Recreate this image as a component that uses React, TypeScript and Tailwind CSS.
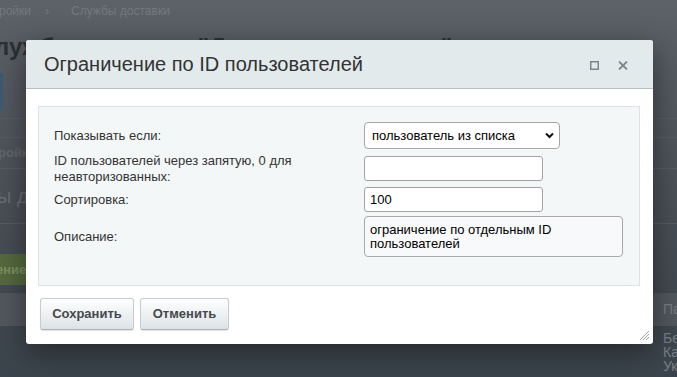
import React from "react";

export default function App() {
  return (
    <div className="relative h-[377px] w-[677px] overflow-hidden bg-linear-to-b from-[#5d6168] via-[#4b5158] to-[#3b444c] font-['Liberation_Sans',Arial,sans-serif]">
      {/* dimmed page behind the dialog */}
      <div className="flex h-full flex-col">
        <div className="flex h-[21px] items-center gap-[14px] whitespace-nowrap text-[12px] leading-[14px] text-[#74787f]">
          <span className="-ml-[1px]">ройки</span>
          <span>›</span>
          <span className="ml-[8px]">Службы доставки</span>
        </div>
        <div className="-ml-[6px] flex h-[44px] items-end gap-[24px] whitespace-nowrap pb-[4px] text-[24px] leading-[28px] font-bold text-[#2c3035]">
          <span>лужбы доставки "Доставка курьером"</span>
          <span className="text-[14px] font-normal text-[#6b7076]">+</span>
        </div>
        <div className="h-[8px]" />
        <div className="flex h-[37px]">
          <div className="w-[3px] bg-[#3a5b74]" />
        </div>
        <div className="h-[8px]" />
        <div className="h-[19px] border-t border-[#585e64]" />
        <div className="flex h-[31px] items-center border-t border-[#585e64] whitespace-nowrap text-[13px] font-bold text-[#62676d]">
          <span className="-ml-[2px]">ройки</span>
        </div>
        <div className="flex h-[56px] items-center border-t border-b border-[#565c62] whitespace-nowrap text-[20px] text-[#696e74]">
          <span className="-ml-[3px]">ы доставки</span>
        </div>
        <div className="h-[30px]" />
        <div className="flex h-[31px]">
          <div className="flex w-[80px] items-center bg-[#56693e] pl-[4px] text-[13px] font-bold text-[#7c9160]">
            <span className="-ml-[8px]">ение</span>
          </div>
        </div>
        <div className="h-[8px]" />
        <div className="flex h-[34px] items-center justify-end border-b border-[#3f474e] bg-[#52585f] text-[14px] text-[#777c83]">
          <span className="w-[14px] overflow-hidden whitespace-nowrap">Па</span>
        </div>
        <div className="flex flex-1 pt-[4px] text-[13px] leading-[14px] text-[#596068]">
          <span className="ml-[160px] w-[220px]">100</span>
          <span>по местоположению</span>
          <div className="ml-auto flex w-[14px] flex-col overflow-hidden whitespace-nowrap text-[14px] leading-[14px] text-[#7a8087]">
            <span>Бе</span>
            <span>Ка</span>
            <span>Ук</span>
          </div>
        </div>
      </div>

      {/* dialog */}
      <div className="absolute left-[26px] top-[40px] flex h-[304px] w-[627px] flex-col rounded-[3px] bg-white shadow-[0_8px_30px_rgba(0,0,0,0.45)]">
        <div className="flex h-[49px] shrink-0 items-center justify-between rounded-t-[3px] border-b border-[#b7bfc3] bg-[#e2eaec] pl-[18px] pr-[25px]">
          <span className="text-[20px] leading-[24px] text-[#333]">Ограничение по ID пользователей</span>
          <div className="flex items-center gap-[19px] pt-[2px]">
            <svg width="9" height="9" viewBox="0 0 9 9">
              <rect x="0.75" y="0.75" width="7.5" height="7.5" fill="none" stroke="#7b868e" strokeWidth="1.5" />
            </svg>
            <svg width="10" height="9" viewBox="0 0 10 9">
              <path d="M1 0.5 L9 8.5 M9 0.5 L1 8.5" stroke="#7b868e" strokeWidth="1.8" />
            </svg>
          </div>
        </div>

        <div className="ml-[12px] mr-[13px] mt-[17px] flex h-[180px] shrink-0 flex-col border border-[#dce3e6] bg-[#f4f7f8] pl-[15px] pt-[15px] text-[13px] text-[#333]">
          <div className="flex h-[27px] items-center">
            <div className="w-[310px] shrink-0">Показывать если:</div>
            <div className="relative">
              <select
                defaultValue="list"
                className="h-[27px] w-[196px] appearance-none rounded-[4px] border border-[#a6a6a6] bg-white pl-[7px] text-[13px] text-black outline-none"
              >
                <option value="list">пользователь из списка</option>
              </select>
              <svg className="pointer-events-none absolute right-[6px] top-[10px]" width="9" height="7" viewBox="0 0 9 7">
                <path d="M1 1.5 L4.5 5 L8 1.5" fill="none" stroke="#111" strokeWidth="2" />
              </svg>
            </div>
          </div>
          <div className="mt-[7px] flex h-[25px] items-center">
            <div className="w-[310px] shrink-0 leading-[16px]">
              ID пользователей через запятую, 0 для
              <br />
              неавторизованных:
            </div>
            <input
              defaultValue=""
              className="h-[25px] w-[179px] rounded-[3px] border border-[#a3a3a3] bg-white px-[5px] text-[13px] text-black outline-none"
            />
          </div>
          <div className="mt-[6px] flex h-[25px] items-center">
            <div className="w-[310px] shrink-0">Сортировка:</div>
            <input
              defaultValue="100"
              className="h-[25px] w-[179px] rounded-[3px] border border-[#a3a3a3] bg-white px-[5px] text-[13px] text-black outline-none"
            />
          </div>
          <div className="mt-[4px] flex h-[41px] items-center">
            <div className="w-[310px] shrink-0">Описание:</div>
            <textarea
              readOnly
              defaultValue="ограничение по отдельным ID пользователей"
              className="h-[41px] w-[259px] resize-none overflow-hidden rounded-[4px] border border-[#a9a9a9] bg-[#f7f9fa] px-[5px] pt-[6px] text-[13px] leading-[14px] text-black outline-none"
            />
          </div>
        </div>

        <div className="ml-[14px] mt-[12px] flex gap-[6px]">
          <button className="h-[32px] w-[94px] rounded-[3px] border border-[#c6cdd0] border-b-[#aab2b6] bg-linear-to-b from-white to-[#dce3e6] text-[13px] font-bold text-[#45494c] shadow-[0_1px_1px_rgba(0,0,0,0.12)]">
            Сохранить
          </button>
          <button className="h-[32px] w-[89px] rounded-[3px] border border-[#c6cdd0] border-b-[#aab2b6] bg-linear-to-b from-white to-[#dce3e6] text-[13px] font-bold text-[#45494c] shadow-[0_1px_1px_rgba(0,0,0,0.12)]">
            Отменить
          </button>
        </div>

        <svg className="absolute bottom-[3px] right-[3px]" width="11" height="11" viewBox="0 0 11 11">
          <path d="M10 1 L1 10 M10 4 L4 10 M10 7 L7 10" stroke="#9aa3a8" strokeWidth="1" />
        </svg>
      </div>
    </div>
  );
}
